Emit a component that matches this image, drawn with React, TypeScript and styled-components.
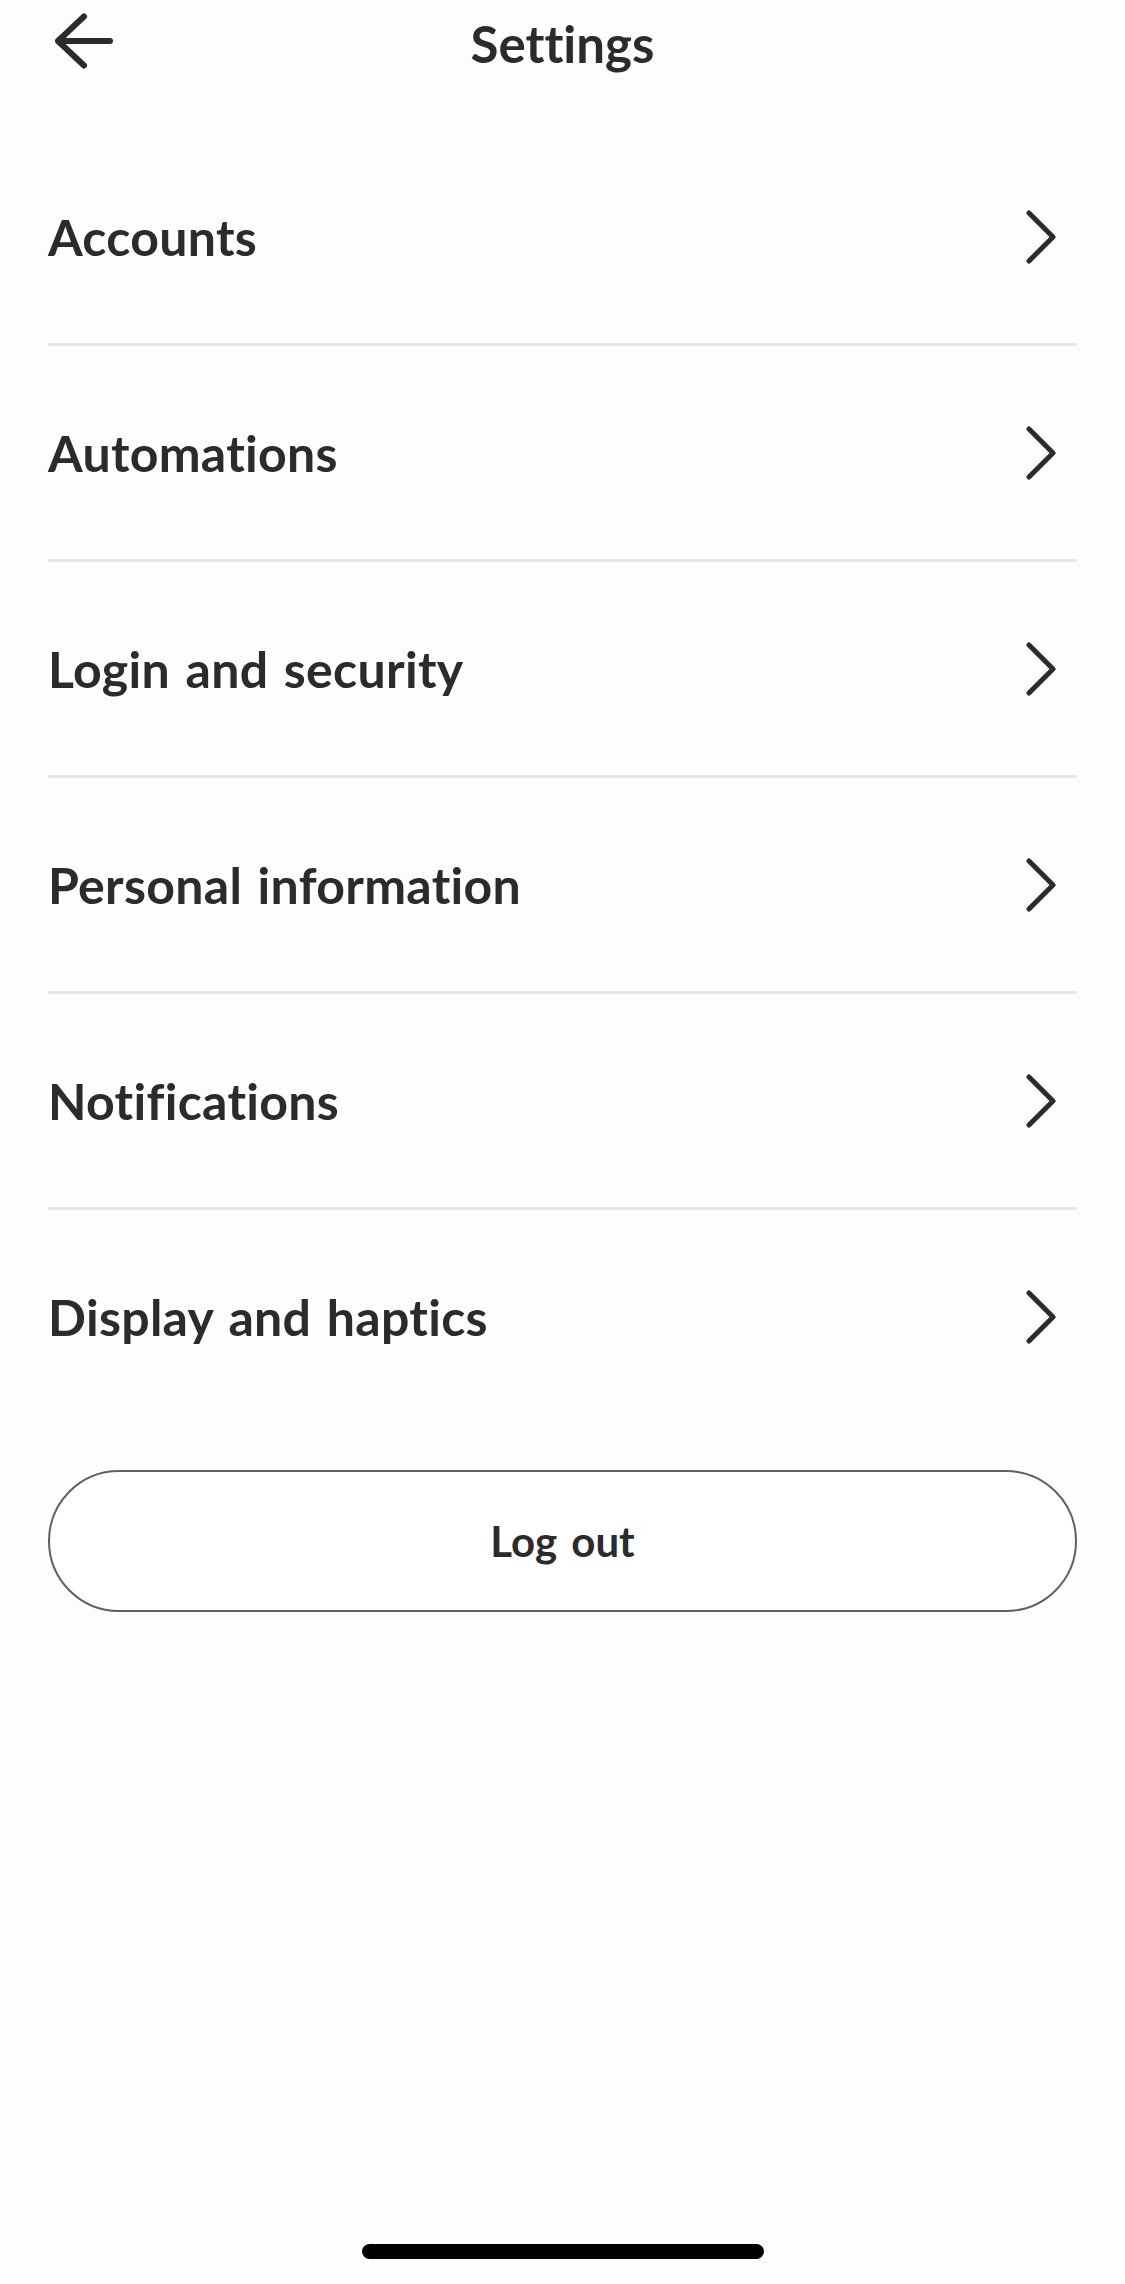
import React from "react";
import styled, { createGlobalStyle } from "styled-components";

const GlobalStyle = createGlobalStyle`
  html, body {
    margin: 0;
    padding: 0;
    background: #fdfdfd;
  }
  * { box-sizing: border-box; }
  body {
    font-family: "Lato", "Noto Sans", sans-serif;
    color: #2b2b2b;
    font-variant-ligatures: none;
  }
`;

const Page = styled.div`
  width: 1125px;
  height: 2284px;
  display: flex;
  flex-direction: column;
  background: #fdfdfd;
  overflow: hidden;
`;

const Header = styled.header`
  height: 86px;
  display: grid;
  grid-template-columns: 1fr auto 1fr;
  align-items: center;
  padding: 0 55px;
`;

const BackButton = styled.button`
  justify-self: start;
  display: flex;
  align-items: center;
  padding: 0;
  margin: 0;
  margin-top: -4px;
  border: none;
  background: none;
  color: #2b2b2b;
`;

const Title = styled.h1`
  margin: 0;
  font-family: "Lato", "Noto Sans", sans-serif;
  font-weight: 700;
  font-size: 51px;
  line-height: 1;
  color: #2b2b2b;
  font-variant-ligatures: none;
`;

const List = styled.ul`
  list-style: none;
  margin: 44px 48px 0;
  padding: 0;
`;

const Row = styled.li<{ $last?: boolean }>`
  height: ${(p) => (p.$last ? "213px" : "216px")};
  display: flex;
  align-items: center;
  justify-content: space-between;
  padding: 0 21px 0 0;
  border-bottom: ${(p) => (p.$last ? "none" : "3px solid #e6e6e6")};
`;

const RowLabel = styled.span`
  font-family: "Lato", "Noto Sans", sans-serif;
  font-weight: 700;
  font-size: 50px;
  line-height: 1;
  letter-spacing: 0.3px;
  word-spacing: 3px;
  color: #2b2b2b;
  font-variant-ligatures: none;
`;

const LogoutButton = styled.button`
  margin: 47px 48px 0;
  height: 142px;
  border: 2.5px solid #606060;
  border-radius: 71px;
  background: #ffffff;
  font-family: "Lato", "Noto Sans", sans-serif;
  font-weight: 700;
  font-size: 42px;
  line-height: 1;
  word-spacing: 4px;
  color: #2b2b2b;
  display: flex;
  align-items: center;
  justify-content: center;
  padding: 0;
`;

const Spacer = styled.div`
  flex: 1;
`;

const HomeIndicator = styled.div`
  align-self: center;
  width: 402px;
  height: 15px;
  border-radius: 8px;
  background: #000000;
  margin-bottom: 25px;
`;

const BackArrow = () => (
  <svg width="58" height="56" viewBox="0 0 58 56" fill="none">
    <path
      d="M29 3.5 L3 28 L29 52.5 M3 28 H55"
      stroke="currentColor"
      strokeWidth="6"
      strokeLinecap="round"
      strokeLinejoin="round"
    />
  </svg>
);

const Chevron = () => (
  <svg width="30" height="54" viewBox="0 0 30 54" fill="none">
    <path
      d="M3 3 L27 27 L3 51"
      stroke="#2b2b2b"
      strokeWidth="5"
      strokeLinecap="round"
      strokeLinejoin="round"
    />
  </svg>
);

const items = [
  "Accounts",
  "Automations",
  "Login and security",
  "Personal information",
  "Notifications",
  "Display and haptics",
];

export default function App() {
  return (
    <>
      <GlobalStyle />
      <Page>
        <Header>
          <BackButton aria-label="Back">
            <BackArrow />
          </BackButton>
          <Title>Settings</Title>
          <div />
        </Header>
        <List>
          {items.map((label, i) => (
            <Row key={label} $last={i === items.length - 1}>
              <RowLabel>{label}</RowLabel>
              <Chevron />
            </Row>
          ))}
        </List>
        <LogoutButton>Log out</LogoutButton>
        <Spacer />
        <HomeIndicator />
      </Page>
    </>
  );
}
